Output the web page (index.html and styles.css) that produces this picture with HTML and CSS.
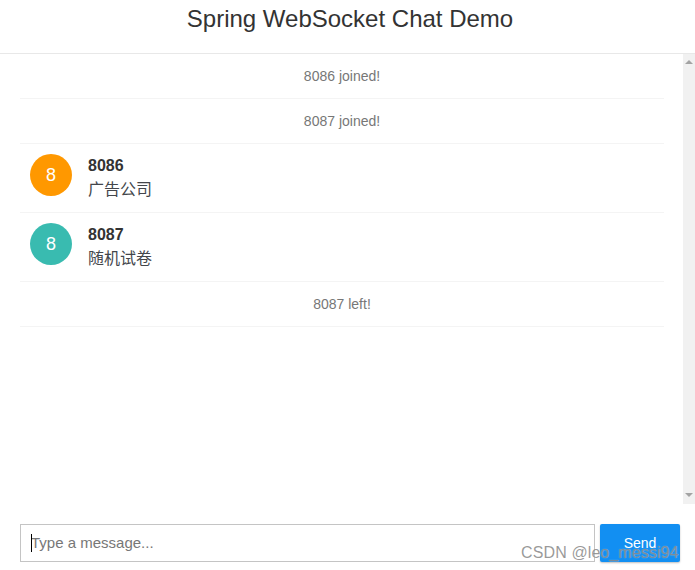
FILE: index.html
```html
<!DOCTYPE html>
<html lang="en">
<head>
<meta charset="utf-8">
<title>Spring WebSocket Chat Demo</title>
<link rel="stylesheet" href="styles.css">
</head>
<body>
<div class="app">
  <header class="header"><h2 class="title">Spring WebSocket Chat Demo</h2></header>
  <div class="main">
    <ul class="list">
      <li class="event">8086 joined!</li>
      <li class="event">8087 joined!</li>
      <li class="chat">
        <i class="avatar orange">8</i>
        <div class="body"><span class="name">8086</span><p class="text">广告公司</p></div>
      </li>
      <li class="chat">
        <i class="avatar teal">8</i>
        <div class="body"><span class="name">8087</span><p class="text">随机试卷</p></div>
      </li>
      <li class="event">8087 left!</li>
    </ul>
    <div class="scrollbar">
      <svg class="arrow" width="12" height="17" viewBox="0 0 12 17"><path d="M2 10h8L6 6z" fill="#a3a3a3"/></svg>
      <svg class="arrow" width="12" height="17" viewBox="0 0 12 17"><path d="M2 6h8L6 10z" fill="#a3a3a3"/></svg>
    </div>
  </div>
  <form class="composer">
    <div class="field">
      <input class="input" type="text" placeholder="Type a message...">
      <span class="caret"></span>
    </div>
    <button class="send" type="button">Send</button>
  </form>
</div>
<div class="watermark">CSDN @leo_messi94</div>
</body>
</html>
```
FILE: styles.css
```css
* { box-sizing: border-box; }
html, body { margin: 0; height: 100%; overflow: hidden; }
body { font-family: "Liberation Sans", "Noto Sans CJK SC", sans-serif; color: #333; background: #fff; position: relative; }
.app { display: flex; flex-direction: column; height: 570px; }
.header { height: 54px; border-bottom: 1px solid #e8e8e8; padding-left: 5px; text-align: center; flex: none; }
.title { margin: 0; font-size: 24px; font-weight: 400; line-height: 38px; color: #333; }
.main { display: flex; height: 450px; flex: none; }
.list { list-style: none; margin: 0; padding: 0 19px 0 20px; flex: 1; min-width: 0; }
.event { height: 45px; line-height: 44px; border-bottom: 1px solid #f4f4f4; text-align: center; font-size: 14px; color: #777; }
.chat { height: 69px; display: flex; padding: 10px 10px 0; border-bottom: 1px solid #f4f4f4; }
.avatar { width: 42px; height: 42px; border-radius: 50%; flex: none; color: #fff; font-style: normal; font-size: 18px; line-height: 42px; text-align: center; }
.orange { background: #ff9800; }
.teal { background: #39bbb0; }
.body { margin-left: 16px; }
.name { display: block; font-size: 16px; font-weight: 700; line-height: 24px; color: #333; }
.text { margin: 0; font-size: 16px; line-height: 24px; color: #43464b; }
.scrollbar { width: 12px; flex: none; background: #f1f1f1; display: flex; flex-direction: column; justify-content: space-between; }
.arrow { display: block; }
.composer { display: flex; gap: 5px; padding: 20px 15px 0 20px; }
.field { position: relative; flex: 1; }
.input { display: block; width: 100%; height: 38px; border: 1px solid #c4c4c4; padding: 0 10px 2px; font: 15px "Liberation Sans", sans-serif; color: #333; outline: none; background: #fff; }
.input::placeholder { color: #777; opacity: 1; }
.caret { position: absolute; left: 11px; top: 10px; width: 1px; height: 18px; background: #000; }
.send { width: 80px; height: 38px; border: 0; border-radius: 2px; background: #128ff2; color: #fff; font: 14px "Liberation Sans", sans-serif; box-shadow: 0 1px 2px rgba(0,0,0,.25); padding: 0; }
.watermark { position: absolute; left: 521px; top: 543px; font-size: 16px; letter-spacing: .12px; line-height: 20px; color: rgba(120,120,120,.75); white-space: nowrap; text-shadow: 0 0 1px rgba(255,255,255,.6); }
```
